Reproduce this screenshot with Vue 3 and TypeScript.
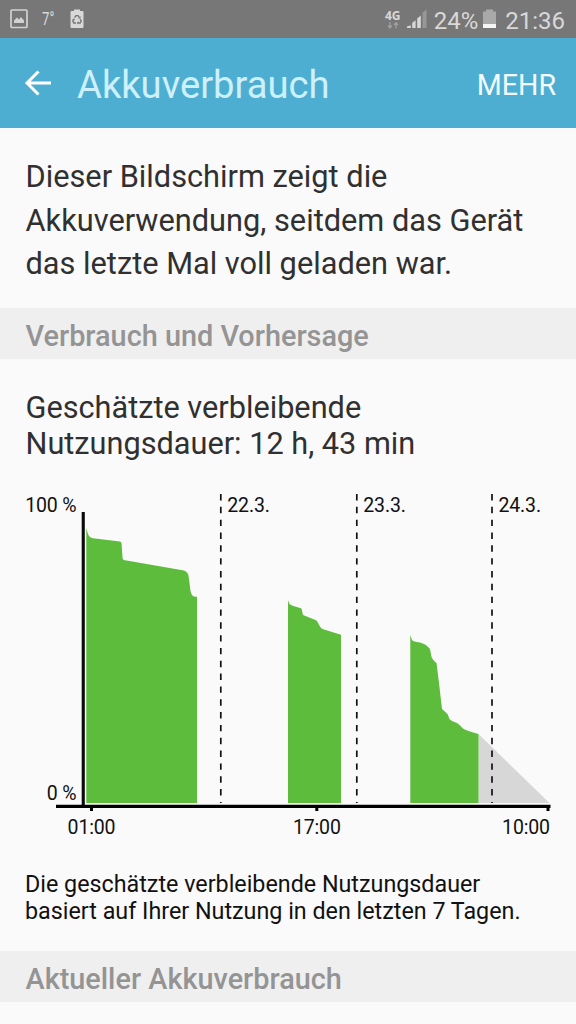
<script setup lang="ts">
interface DayMarker {
  x: number
  label: string
}
interface Tick {
  x: number
  labelX: number
  label: string
}

const days: DayMarker[] = [
  { x: 220.8, label: '22.3.' },
  { x: 356.8, label: '23.3.' },
  { x: 492, label: '24.3.' },
]

const ticks: Tick[] = [
  { x: 91.5, labelX: 91.5, label: '01:00' },
  { x: 316.8, labelX: 316.8, label: '17:00' },
  { x: 548, labelX: 526, label: '10:00' },
]

const levels: string[] = [
  'M86.3 323V48L88 54Q89 57.500 93 58.300L120 61.500Q121.400 61.700 121.600 64L122.600 78.500Q122.700 80 125 80.300L184 90.500Q188.500 92 188.700 97L190.500 111Q191.500 116.500 195 116.800H197V323Z',
  'M288 323V120L289.300 124Q291 125.500 301.500 128.500L303 135L313 139Q317.500 140 318.500 144Q321 149 324 149.500L341 154.700V323Z',
  'M410.300 323V155L412 160Q413 161.500 420 162.600Q426 164 430 169L431.300 176Q432 179.500 436.500 183L439 203L442 229L447.500 234L449.500 239Q451 241 457 243Q460 245 463 248.500Q465 250 478.500 254V323Z',
]
</script>

<template>
  <div class="screen">
    <header class="status">
      <div class="left">
        <svg class="photo" width="18" height="20" viewBox="0 0 18 20">
          <rect x="1" y="1" width="16" height="17.500" rx="1" fill="none" stroke="#d2d2d2" stroke-width="1.700" />
          <path d="M4 14v-2.500l3-3 2 2 2-2.500 3 3.500V14z" fill="#d2d2d2" />
        </svg>
        <span class="temp">7°</span>
        <svg class="recycle" width="14" height="20" viewBox="0 0 14 20">
          <path d="M1.500 2H4V.5h6V2h2.500q1 0 1 1v15q0 1-1 1h-11q-1 0-1-1V3q0-1 1-1z" fill="#d8d8d8" />
          <g fill="none" stroke="#777" stroke-width="1.400">
            <path d="M4.600 8.600 6 6.600h2l1.200 1.800M10.200 10l1 2-1 2H8M6 14H3.800l-1-2 1-1.800" />
          </g>
          <path d="M10.500 7v2.500H8zM8.500 12.200v3.400L6.700 14zM2.200 10.200l2.200-.8.600 2.200z" fill="#777" />
        </svg>
      </div>
      <div class="right">
        <div class="net">
          <span>4G</span>
          <svg width="12" height="7" viewBox="0 0 12 7">
            <path d="M3 0v5M1 3.500l2 2.500 2-2.500M9 6.500V1.500M7 3l2-2.500L11 3" fill="none" stroke="#a0a0a0" stroke-width="1.300" />
          </svg>
        </div>
        <svg class="signal" width="21" height="20" viewBox="0 0 21 20">
          <path d="M0 19v-1.500l3.800-1.300V19zM5.200 19v-5.300l3.400-2.400V19zM10.200 19V9.500l3.600-3V19z" fill="#d8d8d8" />
          <path d="M15.500 19V3.500L19.500.5V19z" fill="#979797" />
        </svg>
        <span class="pct">24%</span>
        <svg class="battery" width="13" height="20" viewBox="0 0 13 20">
          <path d="M0 2.500h3V.5h7v2h3V15H0z" fill="#a9a9a9" />
          <path d="M0 15h13v4H0z" fill="#f5f5f5" />
        </svg>
        <span class="clock">21:36</span>
      </div>
    </header>

    <nav class="bar">
      <svg class="back" width="28" height="28" viewBox="0 0 28 28">
        <path d="M14.500 2.500 3 14l11.500 11.500M3 14h24" fill="none" stroke="#fff" stroke-width="3" />
      </svg>
      <h1>Akkuverbrauch</h1>
      <span class="more">MEHR</span>
    </nav>

    <p class="intro">Dieser Bildschirm zeigt die<br />Akkuverwendung, seitdem das Gerät<br />das letzte Mal voll geladen war.</p>

    <h2>Verbrauch und Vorhersage</h2>

    <p class="estimate">Geschätzte verbleibende<br />Nutzungsdauer: 12 h, 43 min</p>

    <svg class="chart" width="576" height="360" viewBox="0 0 576 360">
      <path d="M478.500 254 549.500 323H478.500z" fill="#d7d7d7" />
      <path v-for="(d, i) in levels" :key="i" :d="d" fill="#5dbc3c" />
      <line
        v-for="day in days"
        :key="day.label"
        :x1="day.x"
        :x2="day.x"
        y1="14"
        y2="323"
        stroke="#111"
        stroke-width="1.700"
        stroke-dasharray="6.400 6.430"
      />
      <path d="M81.700 32H84.800V325H81.700z" fill="#0a0a0a" />
      <path d="M56 324.800H550.500V328H56z" />
      <rect v-for="t in ticks" :key="t.label" :x="t.x - 1.5" y="328" width="3" height="3" />
      <text x="76.500" y="32.300" text-anchor="end">100 %</text>
      <text x="76.500" y="320" text-anchor="end">0 %</text>
      <text v-for="day in days" :key="day.label" :x="day.x + 6.500" y="32.300">{{ day.label }}</text>
      <text v-for="t in ticks" :key="t.label" :x="t.labelX" y="353.500" text-anchor="middle">{{ t.label }}</text>
    </svg>

    <p class="note">Die geschätzte verbleibende Nutzungsdauer<br />basiert auf Ihrer Nutzung in den letzten 7 Tagen.</p>

    <h2>Aktueller Akkuverbrauch</h2>
  </div>
</template>

<style>
body {
  margin: 0;
  background: #fafafa;
}
</style>

<style scoped>
.screen {
  width: 576px;
  height: 1024px;
  overflow: hidden;
  background: #fafafa;
  font-family: Roboto, 'Liberation Sans', sans-serif;
  color: #303030;
}
p,
h1,
h2 {
  margin: 0;
  white-space: nowrap;
}
.status {
  height: 38px;
  background: #777;
  color: #d8d8d8;
  display: flex;
  justify-content: space-between;
  align-items: center;
  padding: 0 11px 0 10px;
  box-sizing: border-box;
}
.left,
.right {
  display: flex;
  align-items: center;
}
.temp {
  font-size: 17.500px;
  line-height: 20px;
  width: 12px;
  margin: 0 16px 0 14px;
  transform: scaleX(0.75);
  transform-origin: left;
}
.net {
  width: 16px;
  display: flex;
  flex-direction: column;
  align-items: center;
  font: 700 12px/11px 'Open Sans', sans-serif;
  gap: 1px;
}
.signal {
  margin: 0 6px 0 6px;
}
.pct,
.clock {
  font-size: 24px;
  line-height: 38px;
  padding-top: 2px;
  box-sizing: border-box;
  height: 38px;
}
.battery {
  margin: 0 9px 0 5px;
}
.bar {
  height: 90px;
  background: #4eaed1;
  display: flex;
  align-items: center;
  padding: 0 20px 0 24px;
}
h1 {
  font-size: 38.200px;
  font-weight: 400;
  line-height: 40px;
  color: #cdf1fc;
  margin: 3px 0 0 25px;
  flex: 1;
}
.more {
  color: #f2fbff;
  font-size: 28.600px;
  line-height: 40px;
  margin-top: 3px;
}
.intro {
  padding: 27px 25.500px 0;
  height: 180px;
  box-sizing: border-box;
  font-size: 30.750px;
  line-height: 43.500px;
}
h2 {
  height: 51px;
  background: #efefef;
  padding: 3px 25.500px 0;
  box-sizing: border-box;
  font-size: 28.850px;
  font-weight: 500;
  line-height: 51px;
  color: #949494;
}
.estimate {
  padding: 31px 25.500px 0;
  height: 121px;
  box-sizing: border-box;
  font-size: 30.700px;
  line-height: 36px;
}
.chart {
  display: block;
}
text {
  font-family: Roboto, sans-serif;
  font-size: 19.500px;
  letter-spacing: -0.150px;
  fill: #111;
}
.note {
  padding: 31px 25px 0;
  height: 111px;
  box-sizing: border-box;
  font-size: 23.300px;
  line-height: 27px;
  color: #111;
}
</style>
